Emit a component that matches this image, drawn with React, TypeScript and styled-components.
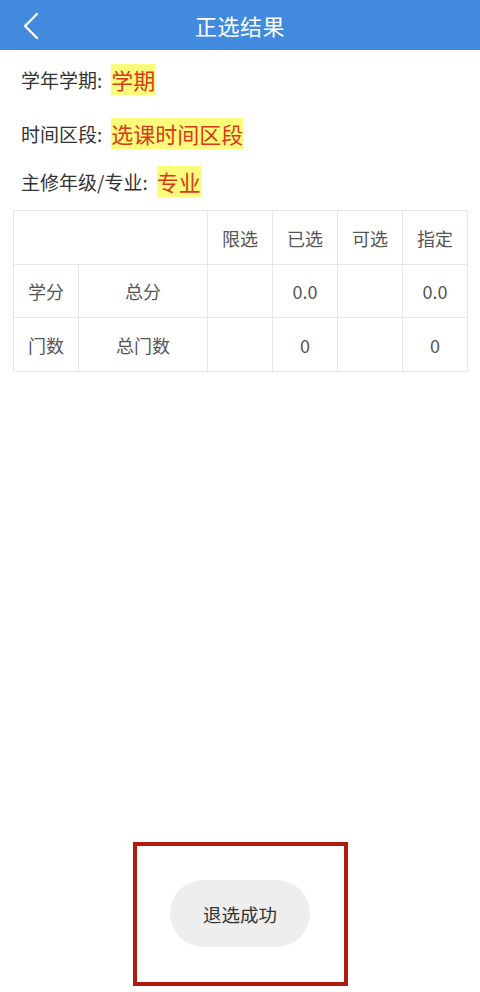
import styled, { createGlobalStyle } from 'styled-components';

const GlobalStyle = createGlobalStyle`
  html, body {
    margin: 0;
    padding: 0;
    background: #ffffff;
  }
  body {
    font-family: "Noto Sans CJK SC", "Noto Sans", sans-serif;
  }
`;

const Page = styled.div`
  position: relative;
  width: 480px;
  min-height: 992px;
  background: #ffffff;
  overflow: hidden;
`;

const Header = styled.header`
  height: 50px;
  background: #418ade;
  display: flex;
  align-items: center;
  justify-content: center;
  position: relative;
`;

const BackButton = styled.div`
  position: absolute;
  left: 20px;
  top: 11px;
  width: 22px;
  height: 30px;
  display: flex;
  align-items: center;
  justify-content: center;
`;

const Title = styled.h1`
  margin: 0;
  font-size: 22px;
  font-weight: 400;
  color: #ffffff;
  letter-spacing: 0.5px;
  line-height: 1;
`;

const Info = styled.section`
  padding: 14px 21px 0;
  display: flex;
  flex-direction: column;
`;

const InfoRow = styled.div<{ $top: number }>`
  display: flex;
  align-items: center;
  height: 31px;
  margin-top: ${(p) => p.$top}px;
`;

const Label = styled.span`
  font-size: 19px;
  color: #333333;
  margin-right: 9px;
`;

const Highlight = styled.span`
  background: #fcfc7c;
  color: #d8391c;
  font-size: 22px;
  line-height: 31px;
  height: 31px;
`;

const Table = styled.table`
  margin: 13px 13px 0;
  width: 454px;
  border-collapse: collapse;
  table-layout: fixed;
`;

const Cell = styled.td<{ $h?: number }>`
  border: 1px solid #e6e6e6;
  height: ${(p) => p.$h ?? 52}px;
  padding: 0;
  text-align: center;
  vertical-align: middle;
  font-size: 18px;
  color: #555555;
`;

const Toast = styled.div`
  position: absolute;
  left: 170px;
  top: 880px;
  width: 140px;
  height: 67px;
  border-radius: 34px;
  background: #eeeeee;
  display: flex;
  align-items: center;
  justify-content: center;
  font-size: 18.5px;
  color: #333333;
`;

const Annotation = styled.div`
  position: absolute;
  left: 133px;
  top: 842px;
  width: 215px;
  height: 144px;
  box-sizing: border-box;
  border: 4px solid #b21a0e;
`;

const cols = [65, 129, 65, 65, 65, 65];

const App = () => {
  return (
    <Page>
      <GlobalStyle />
      <Header>
        <BackButton>
          <svg width="18" height="28" viewBox="0 0 18 28" fill="none">
            <path d="M15 2 L3 14 L15 26" stroke="#ffffff" strokeWidth="2.4" strokeLinecap="round" strokeLinejoin="round" />
          </svg>
        </BackButton>
        <Title>正选结果</Title>
      </Header>

      <Info>
        <InfoRow $top={0}>
          <Label>学年学期:</Label>
          <Highlight>学期</Highlight>
        </InfoRow>
        <InfoRow $top={23}>
          <Label>时间区段:</Label>
          <Highlight>选课时间区段</Highlight>
        </InfoRow>
        <InfoRow $top={17}>
          <Label>主修年级/专业:</Label>
          <Highlight>专业</Highlight>
        </InfoRow>
      </Info>

      <Table>
        <colgroup>
          {cols.map((w, i) => (
            <col key={i} style={{ width: w }} />
          ))}
        </colgroup>
        <tbody>
          <tr>
            <Cell colSpan={2} $h={53}></Cell>
            <Cell $h={53}>限选</Cell>
            <Cell $h={53}>已选</Cell>
            <Cell $h={53}>可选</Cell>
            <Cell $h={53}>指定</Cell>
          </tr>
          <tr>
            <Cell>学分</Cell>
            <Cell>总分</Cell>
            <Cell></Cell>
            <Cell>0.0</Cell>
            <Cell></Cell>
            <Cell>0.0</Cell>
          </tr>
          <tr>
            <Cell $h={53}>门数</Cell>
            <Cell $h={53}>总门数</Cell>
            <Cell $h={53}></Cell>
            <Cell $h={53}>0</Cell>
            <Cell $h={53}></Cell>
            <Cell $h={53}>0</Cell>
          </tr>
        </tbody>
      </Table>

      <Annotation />
      <Toast>退选成功</Toast>
    </Page>
  );
};

export default App;
